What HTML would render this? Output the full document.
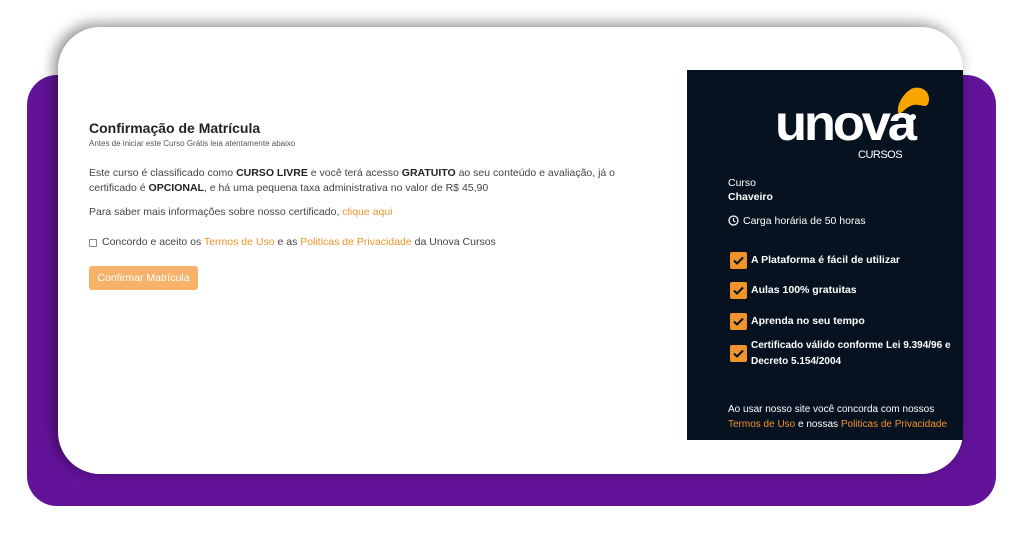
<!DOCTYPE html>
<html><head><meta charset="utf-8"><style>
*{margin:0;padding:0;box-sizing:border-box}
body{width:1024px;height:536px;background:#fff;position:relative;overflow:hidden;font-family:"Liberation Sans",Arial,sans-serif;color:#333}
.purple{position:absolute;left:27px;top:75px;width:969px;height:431px;background:#63139a;border-radius:30px}
.card{position:absolute;left:58px;top:27px;width:905px;height:447px;background:#fff;border-radius:42px;box-shadow:-4px -3px 14px rgba(0,0,0,.45)}
.abs{position:absolute;white-space:nowrap}
.o{color:#f0932b}
.dark{position:absolute;left:687px;top:70px;width:276px;height:370px;background:#06121f;color:#fff}
.chk{position:absolute;left:43px;width:17px;height:17px;background:#f0932b;border-radius:2px}
.chk svg{position:absolute;left:2px;top:3px}
.it{position:absolute;left:64px;font-weight:bold;font-size:10.5px;line-height:16px}
</style></head><body>
<div class="purple"></div>
<div class="card"></div>
<div class="abs" style="left:89px;top:120px;font-size:14px;font-weight:bold;color:#222">Confirmação de Matrícula</div>
<div class="abs" style="left:89px;top:139px;font-size:8px;color:#555">Antes de iniciar este Curso Grátis leia atentamente abaixo</div>
<div class="abs" style="left:89px;top:166px;font-size:10.5px;line-height:15px;color:#444">Este curso é classificado como <b style="color:#222">CURSO LIVRE</b> e você terá acesso <b style="color:#222">GRATUITO</b> ao seu conteúdo e avaliação, já o<br>certificado é <b style="color:#222">OPCIONAL</b>, e há uma pequena taxa administrativa no valor de R$ 45,90</div>
<div class="abs" style="left:89px;top:206px;font-size:10.5px;color:#444">Para saber mais informações sobre nosso certificado, <span class="o">clique aqui</span></div>
<div class="abs" style="left:89px;top:239px;width:8px;height:8px;border:1px solid #888;border-radius:1px"></div>
<div class="abs" style="left:102px;top:236px;font-size:10.5px;color:#444">Concordo e aceito os <span class="o">Termos de Uso</span> e as <span class="o">Politicas de Privacidade</span> da Unova Cursos</div>
<div class="abs" style="left:89px;top:266px;width:109px;height:24px;background:#f6b26b;border-radius:3px;color:#fff;font-size:10.5px;line-height:24px;text-align:center">Confirmar Matrícula</div>
<div class="dark">
 <svg class="abs" style="left:208px;top:16px" width="36" height="36" viewBox="0 0 36 36"><path d="M3 26 C2 18 8 8 16 3 C22 0 30 2 33 8 C35 13 34 20 30 20 C26 20 20 16 12 22 C8 25 4 30 3 26Z" fill="#f7a600"/><circle cx="18" cy="31" r="3" fill="#fff"/></svg>
 <div class="abs" style="left:88px;top:28px;font-size:50px;font-weight:bold;letter-spacing:-3px;line-height:50px;transform:scaleX(1.05);transform-origin:left">unova</div>
 <div class="abs" style="left:171px;top:79px;font-size:11px;letter-spacing:-.5px">CURSOS</div>
 <div class="abs" style="left:41px;top:107px;font-size:10.5px">Curso</div>
 <div class="abs" style="left:41px;top:121px;font-size:10.5px;font-weight:bold">Chaveiro</div>
 <svg class="abs" style="left:41px;top:145px" width="11" height="11" viewBox="0 0 11 11"><circle cx="5.5" cy="5.5" r="4.5" fill="none" stroke="#fff" stroke-width="1.3"/><path d="M5.5 3v2.7l1.7 1.2" fill="none" stroke="#fff" stroke-width="1.2"/></svg>
 <div class="abs" style="left:56px;top:145px;font-size:10.5px">Carga horária de 50 horas</div>
 <div class="chk" style="top:182px"><svg width="13" height="11" viewBox="0 0 13 11"><path d="M2 5.5l3 3 6-6" fill="none" stroke="#06121f" stroke-width="2"/></svg></div>
 <div class="it" style="top:182px">A Plataforma é fácil de utilizar</div>
 <div class="chk" style="top:212px"><svg width="13" height="11" viewBox="0 0 13 11"><path d="M2 5.5l3 3 6-6" fill="none" stroke="#06121f" stroke-width="2"/></svg></div>
 <div class="it" style="top:212px">Aulas 100% gratuitas</div>
 <div class="chk" style="top:243px"><svg width="13" height="11" viewBox="0 0 13 11"><path d="M2 5.5l3 3 6-6" fill="none" stroke="#06121f" stroke-width="2"/></svg></div>
 <div class="it" style="top:243px">Aprenda no seu tempo</div>
 <div class="chk" style="top:275px"><svg width="13" height="11" viewBox="0 0 13 11"><path d="M2 5.5l3 3 6-6" fill="none" stroke="#06121f" stroke-width="2"/></svg></div>
 <div class="it" style="top:268px;font-size:10px;white-space:nowrap">Certificado válido conforme Lei 9.394/96 e<br>Decreto 5.154/2004</div>
 <div class="abs" style="left:41px;top:332px;font-size:10px;line-height:15px">Ao usar nosso site você concorda com nossos<br><span class="o">Termos de Uso</span> e nossas <span class="o">Politicas de Privacidade</span></div>
</div>
</body></html>
